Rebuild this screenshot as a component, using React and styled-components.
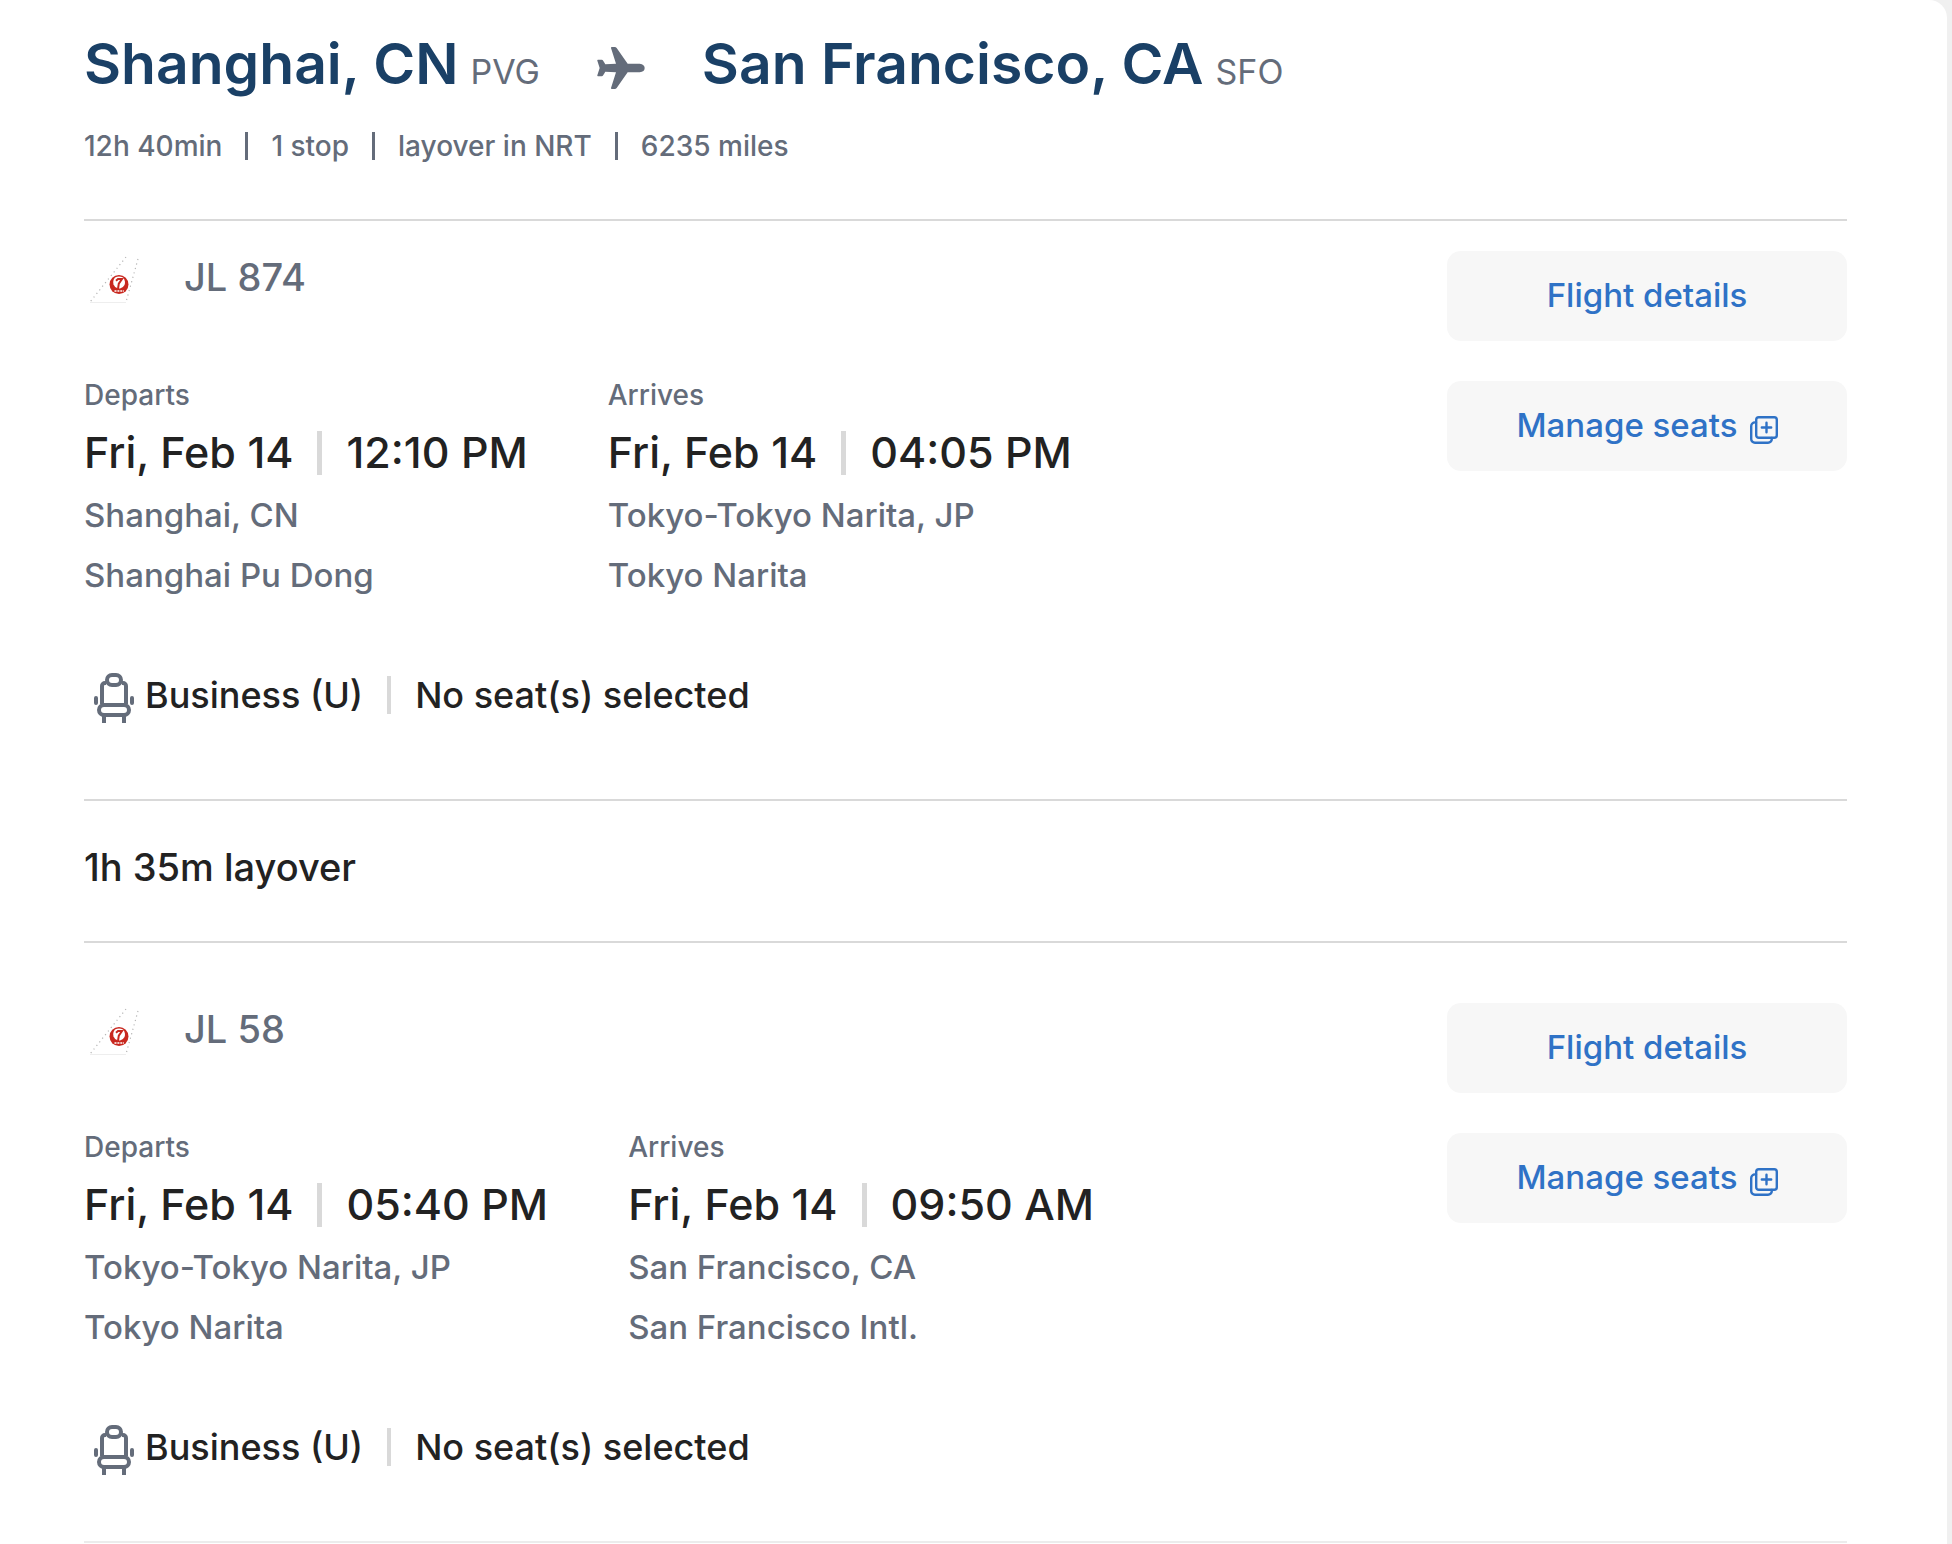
import React from 'react';
import styled, { createGlobalStyle } from 'styled-components';

const GlobalStyle = createGlobalStyle`
  * {
    box-sizing: border-box;
  }
  body {
    margin: 0;
    background: #f0f0f0;
    color: #222222;
    font-family: Inter, "Liberation Sans", sans-serif;
    font-weight: 500;
  }
  h1, h2, p, dl, dd, dt {
    margin: 0;
    font-weight: inherit;
  }
`;

const Card = styled.main`
  margin-right: 5px;
  padding: 24px 100px 24px 84px;
  background: #ffffff;
  border-radius: 0 18px 0 0;
`;

const Route = styled.h1`
  display: flex;
  align-items: baseline;
  font-size: 57px;
  line-height: 80px;
  svg {
    margin: 0 57px;
    align-self: center;
  }
`;

const Place = styled.span`
  color: #1a4066;
  font-weight: 600;
`;

const Code = styled.span`
  margin-left: 12px;
  color: #646c7a;
  font-size: 34px;
  font-weight: 400;
`;

const Summary = styled.ul`
  display: flex;
  margin: 14px 0 53px;
  padding: 0;
  list-style: none;
  color: #646c7a;
  font-size: 28px;
  line-height: 40px;
`;

const SummaryItem = styled.li`
  display: flex;
  align-items: center;
  & + &::before {
    content: '';
    width: 3px;
    height: 28px;
    margin: 0 23px;
    background: #646c7a;
  }
`;

const Rule = styled.hr`
  height: 2px;
  margin: 0;
  border: 0;
  background: ${({ $light }) => ($light ? '#ececec' : '#d9d9d9')};
`;

const Segment = styled.section`
  display: flex;
  justify-content: space-between;
  padding: ${({ $first }) => ($first ? '30px 0 74px' : '60px 0 64px')};
`;

const FlightName = styled.h2`
  display: flex;
  height: 60px;
  gap: 40px;
  color: #646c7a;
  font-size: 38px;
  line-height: 52px;
`;

const Stops = styled.dl`
  display: flex;
  gap: 80px;
  margin-top: 64px;
`;

const StopLabel = styled.dt`
  margin-bottom: 5px;
  color: #646c7a;
  font-size: 28px;
  line-height: 40px;
`;

const When = styled.dd`
  display: flex;
  align-items: center;
  font-size: 43px;
  line-height: 65px;
`;

const Where = styled.dd`
  color: #646c7a;
  font-size: 33px;
  line-height: 60px;
`;

const Bar = styled.span`
  width: ${({ $small }) => ($small ? '4px' : '5px')};
  height: ${({ $small }) => ($small ? '38px' : '44px')};
  margin: 0 24px;
  background: #d9d9d9;
`;

const Cabin = styled.div`
  display: flex;
  align-items: center;
  margin-top: 60px;
  padding-left: 10px;
  font-size: 36px;
  line-height: 60px;
  svg {
    margin: 6px 11px 0 0;
  }
`;

const Actions = styled.div`
  display: flex;
  flex-direction: column;
  gap: 40px;
  width: 400px;
`;

const ActionButton = styled.button`
  display: flex;
  align-items: center;
  justify-content: center;
  gap: 12px;
  height: 90px;
  padding: 0 0 2px;
  border: none;
  border-radius: 14px;
  background: #f7f7f7;
  color: #2f72c6;
  font: inherit;
  font-size: 33px;
  cursor: pointer;
  svg {
    margin-top: 10px;
  }
`;

const Layover = styled.p`
  padding: 34px 0 42px;
  font-size: 38px;
  line-height: 64px;
`;

const PlaneIcon = () => (
  <svg width="48" height="42" viewBox="0 0 144 126" fill="#646c7a" aria-hidden="true">
    <path d="M42 3 Q41 0 45 0 H53 Q57 0 59 3 L92 50 H128 Q143 52 143 63 Q143 74 128 76 H92 L59 123 Q57 126 53 126 H45 Q41 126 42 123 L57 76 L25 74 L19 84 Q17 88 14 88 H3 Q0 88 1 85 L8 63 L1 41 Q0 38 3 38 H14 Q17 38 19 42 L25 52 L57 50 Z" />
  </svg>
);

const AirlineLogo = () => (
  <svg width="60" height="60" viewBox="0 0 60 60" fill="none" role="img" aria-label="Japan Airlines">
    <path d="M42 6 L6 51 M54 8 L42 51" stroke="#b5b5b5" strokeWidth="1.2" strokeDasharray="1.2 3.4" />
    <path d="M6 51.5 H42" stroke="#eeeeee" />
    <circle cx="35" cy="33.5" r="9.5" fill="#c8281f" />
    {/* crane: spread wings, bent neck and tail feathers */}
    <path d="M31 26.5 Q35 24.5 39 26.5 Q42 30 40.5 34 Q39 37 36 37.5 H34 Q30.5 36.5 29.5 33.5 Q28.5 29.5 31 26.5 Z" fill="#ffffff" />
    <path d="M32 29.8 L34 28 H38 L34.8 32.6 L34 38" stroke="#c8281f" strokeWidth="2" />
    <path d="M30.5 40 H40" stroke="#ffffff" strokeWidth="1.4" strokeDasharray="2 0.9" />
  </svg>
);

const SeatIcon = () => (
  <svg width="40" height="50" viewBox="0 0 40 50" fill="none" stroke="#646c7a" strokeWidth="4" aria-hidden="true">
    <rect x="13" y="2" width="14" height="10" rx="5" />
    <path d="M12 10 H11 a3 3 0 0 0 -3 3 V31 M28 10 H29 a3 3 0 0 1 3 3 V31" />
    <rect x="5" y="32" width="30" height="10" rx="5" />
    <path d="M10 43 V50 M30 43 V50" />
    <path d="M2 25 V30 M38 25 V30" strokeLinecap="round" />
  </svg>
);

const AddIcon = () => (
  <svg width="28" height="28" viewBox="0 0 28 28" fill="none" stroke="currentColor" strokeWidth="2.4" strokeLinecap="round" aria-hidden="true">
    <rect x="6.2" y="1.2" width="20.6" height="20.6" rx="2.6" />
    <path d="M6 6.4 H5 a3.8 3.8 0 0 0 -3.8 3.8 V23 a3.8 3.8 0 0 0 3.8 3.8 H18 a3.8 3.8 0 0 0 3.8 -3.8 V22" />
    <path d="M16.5 6.8 V16.2 M11.8 11.5 H21.2" />
  </svg>
);

const segments = [
  {
    flight: 'JL 874',
    stops: [
      { label: 'Departs', date: 'Fri, Feb 14', time: '12:10 PM', city: 'Shanghai, CN', airport: 'Shanghai Pu Dong' },
      { label: 'Arrives', date: 'Fri, Feb 14', time: '04:05 PM', city: 'Tokyo-Tokyo Narita, JP', airport: 'Tokyo Narita' },
    ],
  },
  {
    flight: 'JL 58',
    stops: [
      { label: 'Departs', date: 'Fri, Feb 14', time: '05:40 PM', city: 'Tokyo-Tokyo Narita, JP', airport: 'Tokyo Narita' },
      { label: 'Arrives', date: 'Fri, Feb 14', time: '09:50 AM', city: 'San Francisco, CA', airport: 'San Francisco Intl.' },
    ],
  },
];

const FlightSegment = ({ flight, stops, first }) => (
  <Segment $first={first}>
    <div>
      <FlightName>
        <AirlineLogo />
        {flight}
      </FlightName>
      <Stops>
        {stops.map((stop) => (
          <div key={stop.label}>
            <StopLabel>{stop.label}</StopLabel>
            <When>
              {stop.date}
              <Bar />
              {stop.time}
            </When>
            <Where>{stop.city}</Where>
            <Where>{stop.airport}</Where>
          </div>
        ))}
      </Stops>
      <Cabin>
        <SeatIcon />
        Business (U)
        <Bar $small />
        No seat(s) selected
      </Cabin>
    </div>
    <Actions>
      <ActionButton type="button">Flight details</ActionButton>
      <ActionButton type="button">
        Manage seats
        <AddIcon />
      </ActionButton>
    </Actions>
  </Segment>
);

const App = () => (
  <>
    <GlobalStyle />
    <Card>
      <Route>
        <Place>Shanghai, CN</Place>
        <Code>PVG</Code>
        <PlaneIcon />
        <Place>San Francisco, CA</Place>
        <Code>SFO</Code>
      </Route>
      <Summary>
        <SummaryItem>12h 40min</SummaryItem>
        <SummaryItem>1 stop</SummaryItem>
        <SummaryItem>layover in NRT</SummaryItem>
        <SummaryItem>6235 miles</SummaryItem>
      </Summary>
      <Rule />
      <FlightSegment {...segments[0]} first />
      <Rule />
      <Layover>1h 35m layover</Layover>
      <Rule />
      <FlightSegment {...segments[1]} />
      <Rule $light />
    </Card>
  </>
);

export default App;
